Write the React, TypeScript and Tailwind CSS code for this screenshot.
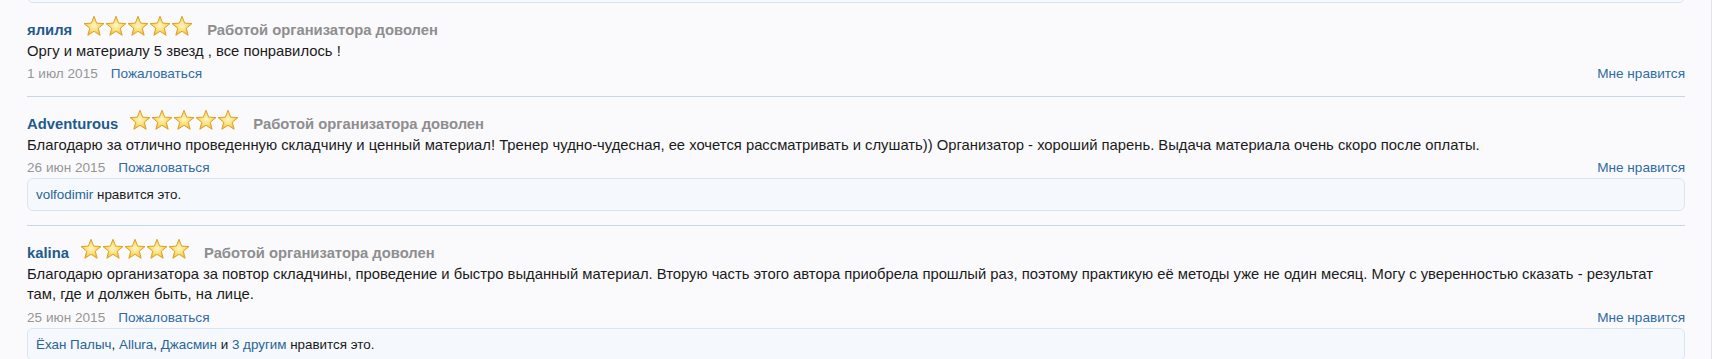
import React from "react";

type Review = {
  user: string;
  text: string;
  date: string;
  likes?: React.ReactNode;
};

const REVIEWS: Review[] = [
  {
    user: "ялиля",
    text: "Оргу и материалу 5 звезд , все понравилось !",
    date: "1 июл 2015",
  },
  {
    user: "Adventurous",
    text: "Благодарю за отлично проведенную складчину и ценный материал! Тренер чудно-чудесная, ее хочется рассматривать и слушать)) Организатор - хороший парень. Выдача материала очень скоро после оплаты.",
    date: "26 июн 2015",
    likes: (
      <>
        <a className="text-[#2a6496]">volfodimir</a> нравится это.
      </>
    ),
  },
  {
    user: "kalina",
    text: "Благодарю организатора за повтор складчины, проведение и быстро выданный материал. Вторую часть этого автора приобрела прошлый раз, поэтому практикую её методы уже не один месяц. Могу с уверенностью сказать - результат там, где и должен быть, на лице.",
    date: "25 июн 2015",
    likes: (
      <>
        <a className="text-[#2a6496]">Ёхан Палыч</a>,{" "}
        <a className="text-[#2a6496]">Allura</a>,{" "}
        <a className="text-[#2a6496]">Джасмин</a> и{" "}
        <a className="text-[#2a6496]">3 другим</a> нравится это.
      </>
    ),
  },
];

function Star({ id }: { id: string }) {
  return (
    <svg width="22" height="22" viewBox="0 0 22 22" className="inline-block align-[-2px]">
      <defs>
        <radialGradient id={id} cx="50%" cy="48%" r="55%">
          <stop offset="0%" stopColor="#fff6c4" />
          <stop offset="50%" stopColor="#fbe07a" />
          <stop offset="100%" stopColor="#f0b62c" />
        </radialGradient>
      </defs>
      <polygon
        points="11,1.3 13.65,8.16 20.99,8.56 15.28,13.19 17.17,20.29 11,16.3 4.83,20.29 6.72,13.19 1.01,8.56 8.35,8.16"
        fill={`url(#${id})`}
        stroke="#dca227"
        strokeWidth="1"
        strokeLinejoin="round"
      />
    </svg>
  );
}

function Stars({ prefix }: { prefix: string }) {
  return (
    <span className="ml-[11px] mr-[14px] inline-block whitespace-nowrap">
      {[0, 1, 2, 3, 4].map((i) => (
        <Star key={i} id={`${prefix}-star-${i}`} />
      ))}
    </span>
  );
}

export default function App() {
  return (
    <div
      className="min-h-[359px] border-r border-[#e3e4ea] bg-[#fafafd] pl-[27px] pr-[26px] text-[#1a1a1a]"
      style={{ fontFamily: '"Liberation Sans", Arial, sans-serif' }}
    >
      {/* tail of the previous like box */}
      <div className="h-[3px] overflow-hidden">
        <div className="-mt-[17px] h-[20px] rounded-md border border-[#d7e6f5] bg-[#f5f9fd]" />
      </div>

      <ol>
        {REVIEWS.map((r, idx) => (
          <li key={r.user} className="border-b border-[#c5d8e8] pb-[12px] pt-[12px] last:border-b-0">
            <div className="text-[14.8px] leading-[20.5px]">
              <a className="font-bold text-[#1f5a8e]">{r.user}</a>
              <Stars prefix={`r${idx}`} />
              <span className="font-bold text-[#8e8e8e]">Работой организатора доволен</span>
            </div>
            <div className="text-[14.8px] leading-[20.5px]">{r.text}</div>
            <div className="mt-[3px] flex items-center justify-between text-[13.6px] leading-[20px]">
              <div>
                <span className="text-[#969696]">{r.date}</span>
                <a className="ml-[13px] text-[#2f6ca3]">Пожаловаться</a>
              </div>
              <a className="text-[#2f6ca3]">Мне нравится</a>
            </div>
            {r.likes && (
              <div className="mb-[2px] rounded-md border border-[#d7e6f5] bg-[#f5f9fd] px-[8px] pb-[6px] pt-[7px] text-[13.4px] leading-[18px]">
                {r.likes}
              </div>
            )}
          </li>
        ))}
      </ol>
    </div>
  );
}
